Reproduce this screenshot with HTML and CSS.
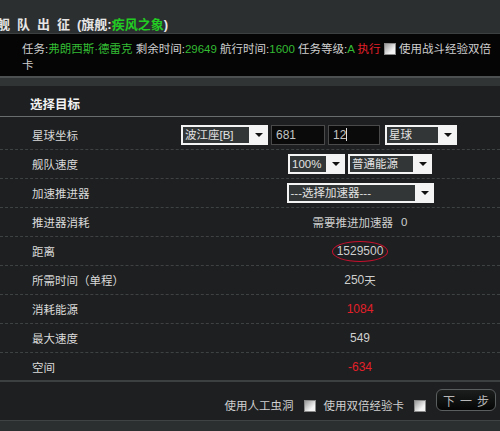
FILE: index.html
```html
<!DOCTYPE html>
<html lang="zh-CN">
<head>
  <meta charset="UTF-8" />
  <title>舰队出征</title>
  <link rel="stylesheet" href="styles.css">
</head>
<body>
  <div class="titlebar">
    <h1 class="title"><span class="spaced">舰队出征</span>(旗舰:<span class="flag">疾风之象</span>)</h1>
  </div>

  <div class="mission">
    任务:<span class="green">弗朗西斯·德雷克</span> 剩余时间:<span class="green">29649</span> 航行时间:<span class="green">1600</span> 任务等级:<span class="green">A</span> <span class="red">执行</span> <span class="check"></span> 使用战斗经验双倍<br>卡
  </div>

  <div class="divider"></div>

  <div class="panel">
    <div class="panel-head">选择目标</div>

    <div class="rows">
      <div class="row">
        <div class="label">星球坐标</div>
        <div class="val coords">
          <div class="select w87"><span class="opt">波江座[B]</span><span class="arrow"></span></div>
          <div class="input w54">681</div>
          <div class="input w52">12<span class="caret"></span></div>
          <div class="select w72"><span class="opt">星球</span><span class="arrow"></span></div>
        </div>
      </div>
      <div class="row">
        <div class="label">舰队速度</div>
        <div class="val">
          <div class="select w57"><span class="opt">100%</span><span class="arrow"></span></div>
          <div class="select w84"><span class="opt">普通能源</span><span class="arrow"></span></div>
        </div>
      </div>
      <div class="row">
        <div class="label">加速推进器</div>
        <div class="val">
          <div class="select w147"><span class="opt">---选择加速器---</span><span class="arrow"></span></div>
        </div>
      </div>
      <div class="row">
        <div class="label">推进器消耗</div>
        <div class="val">需要推进加速器<span class="zero">0</span></div>
      </div>
      <div class="row">
        <div class="label">距离</div>
        <div class="val"><span class="circled num">1529500</span></div>
      </div>
      <div class="row">
        <div class="label">所需时间（单程）</div>
        <div class="val"><span class="num">250</span>天</div>
      </div>
      <div class="row">
        <div class="label">消耗能源</div>
        <div class="val"><span class="num red">1084</span></div>
      </div>
      <div class="row">
        <div class="label">最大速度</div>
        <div class="val"><span class="num">549</span></div>
      </div>
      <div class="row last">
        <div class="label">空间</div>
        <div class="val"><span class="num red">-634</span></div>
      </div>
    </div>

    <div class="footer">
      <span class="foot-text">使用人工虫洞</span>
      <span class="check foot-check"></span>
      <span class="foot-text">使用双倍经验卡</span>
      <span class="check foot-check"></span>
      <button class="next" type="button">下一步</button>
    </div>
  </div>

  <div class="bottom"></div>
</body>
</html>
```

FILE: styles.css
```css
html, body {
  margin: 0;
  padding: 0;
}

body {
  width: 500px;
  height: 431px;
  overflow: hidden;
  background: #1d1f20;
  color: #d6d6d6;
  font-family: "Liberation Sans", "Noto Sans CJK SC", sans-serif;
  font-size: 11.5px;
}

.green { color: #33bb33; }
.red { color: #e3202a; }

.titlebar {
  height: 34px;
  box-sizing: border-box;
  padding-top: 17px;
  background: #2c2f30;
  border-bottom: 1px solid #3d4041;
}

.title {
  margin: 0 0 0 -3px;
  font-size: 13px;
  line-height: 16px;
  font-weight: bold;
  color: #e6e6e6;
}

.spaced {
  letter-spacing: 7px;
}

.flag {
  color: #22cc22;
}

.mission {
  height: 42px;
  box-sizing: border-box;
  padding: 7px 0 2px 22px;
  line-height: 16px;
  background: #050505;
  color: #cfcfcf;
  white-space: nowrap;
}

.check {
  display: inline-block;
  width: 12px;
  height: 12px;
  box-sizing: border-box;
  border: 1px solid #8a8a8a;
  background: linear-gradient(135deg, #9a9a9a, #f4f4f4 70%);
  vertical-align: -2px;
}

.divider {
  height: 8px;
  background: #303434;
  border-top: 2px solid #4c5050;
}

.panel-head {
  padding: 11px 0 3px 30px;
  line-height: 16px;
  font-size: 12.5px;
  font-weight: bold;
  color: #f2f2f2;
  border-bottom: 1px solid #6a6d6d;
}

.rows {
  padding-top: 4px;
}

.row {
  display: grid;
  grid-template-columns: 181px 1fr;
  align-items: center;
  height: 29px;
  box-sizing: border-box;
  border-bottom: 1px dashed #3e4242;
}

.row.last {
  border-bottom: 2px solid #3c4040;
}

.label {
  padding-left: 32px;
  color: #dadada;
}

.val {
  display: flex;
  justify-content: center;
  align-items: center;
  padding-left: 39px;
  color: #cfcfcf;
}

.val.coords {
  justify-content: flex-start;
  padding-left: 0;
}

.num {
  font-size: 12px;
}

.zero {
  margin-left: 8px;
}

.circled {
  border: 1px solid #c8102e;
  border-radius: 50%;
  padding: 3px 4px;
  line-height: 13px;
}

.select {
  display: flex;
  height: 20px;
  box-sizing: border-box;
  padding: 2px 0 2px 2px;
  background: #f4f4f4;
}

.opt {
  flex: 1;
  background: #323636;
  color: #e2e2e2;
  line-height: 16px;
  padding-left: 2px;
  white-space: nowrap;
  overflow: hidden;
}

.arrow {
  width: 19px;
  position: relative;
}

.arrow::after {
  content: "";
  position: absolute;
  left: 6px;
  top: 6px;
  border-left: 4px solid transparent;
  border-right: 4px solid transparent;
  border-top: 4px solid #111;
}

.input {
  height: 20px;
  box-sizing: border-box;
  border: 1px solid #4a4a4a;
  background: #0a0a0a;
  color: #c4c4c4;
  font-size: 12px;
  line-height: 18px;
  padding-left: 4px;
  margin-left: 3px;
}

.caret {
  display: inline-block;
  width: 1px;
  height: 13px;
  background: #ddd;
  vertical-align: -2px;
}

.w87 { width: 87px; }
.w54 { width: 54px; }
.w52 { width: 52px; }
.w72 { width: 72px; margin-left: 5px; }
.w57 { width: 57px; }
.w84 { width: 84px; margin-left: 3px; }
.w147 { width: 147px; }

.footer {
  display: flex;
  justify-content: flex-end;
  align-items: flex-start;
  height: 38px;
  box-sizing: border-box;
  padding: 7px 4px 0 0;
}

.foot-text {
  margin-top: 9px;
  line-height: 16px;
  color: #d0d0d0;
}

.foot-check {
  margin: 11px 10px 0 10px;
}

.foot-check:nth-of-type(2) {
  margin-right: 8px;
}

.next {
  width: 60px;
  height: 22px;
  padding: 0;
  border: 1px solid #5a5e5e;
  border-radius: 6px;
  background: linear-gradient(#1c1e1e, #050505);
  color: #b8b8b8;
  font-family: "Noto Sans CJK SC", sans-serif;
  font-size: 12px;
  letter-spacing: 5px;
  text-indent: 5px;
}

.bottom {
  height: 14px;
  background: #2c2f30;
  border-top: 1px solid #3f4343;
}
```
